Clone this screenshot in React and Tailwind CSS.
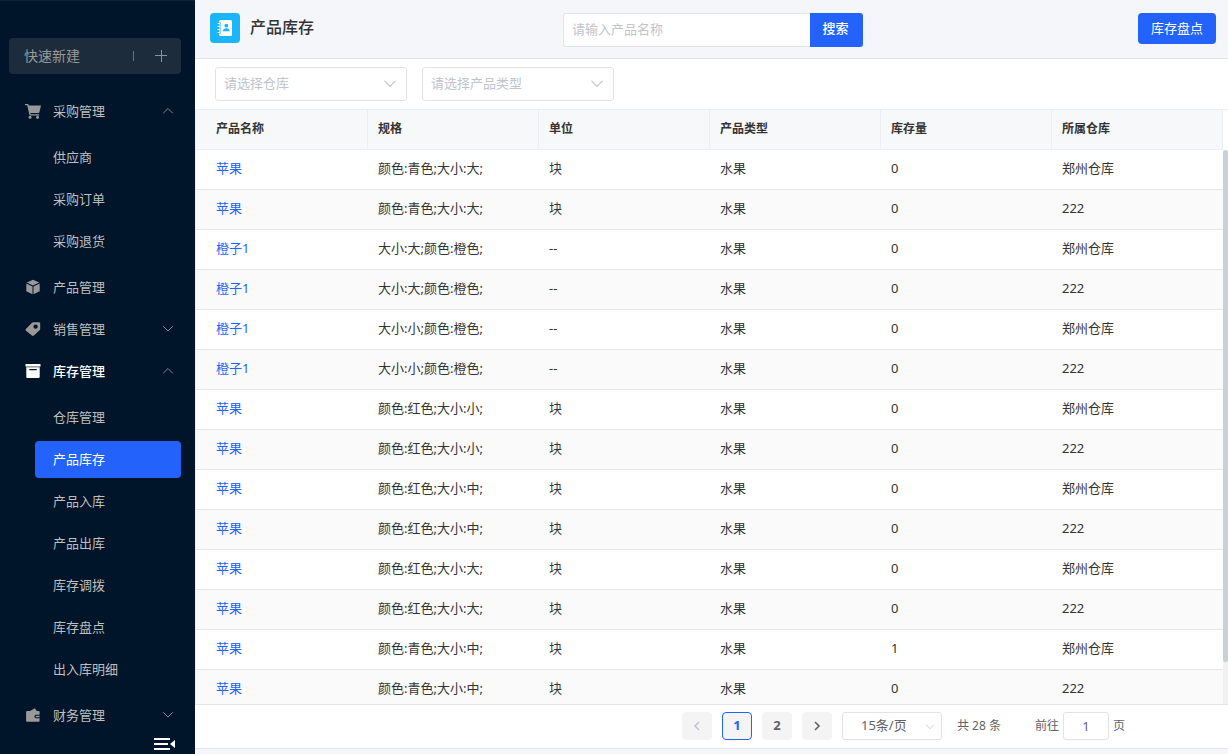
import React from "react";

function Chevron({ up = false, className = "" }) {
  return (
    <svg viewBox="0 0 12 12" className={className} fill="none" stroke="currentColor" strokeLinecap="round" strokeLinejoin="round" aria-hidden="true">
      <path d={up ? "M1.5 8 6 3.500l4.500 4.500" : "M1.500 3.500 6 8l4.500-4.500"} />
    </svg>
  );
}

function CartIcon() {
  return (
    <svg viewBox="0 0 16 16" className="size-4" fill="currentColor" aria-hidden="true">
      <path d="M0 1h3.200l.6 1.600H16l-1.600 6.600a1 1 0 0 1-1 .8H5.300l.4 1.200h8.500v1.300H4.600L2.200 2.300H0z" />
      <circle cx="5" cy="14.300" r="1.500" />
      <circle cx="12.500" cy="14.300" r="1.500" />
    </svg>
  );
}

function BoxIcon() {
  return (
    <svg viewBox="0 0 16 16" className="size-4" fill="currentColor" aria-hidden="true">
      <path d="M8 .8 14.2 3.500 8 6.500 1.800 3.500z" />
      <path d="M1.300 4.500 7.500 7.400v7.900L1.300 12.200z" />
      <path d="M14.700 4.500 8.500 7.400v7.900l6.200-3.100z" />
    </svg>
  );
}

function TagIcon() {
  return (
    <svg viewBox="0 0 16 16" className="size-4" fill="currentColor" aria-hidden="true">
      <path fillRule="evenodd" d="M8.200 1.200h5.600c.8 0 1.400.6 1.400 1.400v5.200c0 .4-.1.800-.4 1.100l-5.900 5.700c-.5.500-1.300.5-1.900 0L.9 9.700c-.5-.5-.5-1.200 0-1.700L7 1.700c.3-.3.700-.5 1.200-.5zM10.600 3.400a2.200 2.200 0 1 0 0 4.400 2.200 2.200 0 0 0 0-4.400z" />
    </svg>
  );
}

function ArchiveIcon() {
  return (
    <svg viewBox="0 0 16 16" className="size-4" fill="currentColor" aria-hidden="true">
      <path d="M.5 1h15v2.600H.5z" />
      <path fillRule="evenodd" d="M1.300 4.300h13.400v9.400c0 .8-.5 1.300-1.300 1.300H2.600c-.8 0-1.300-.5-1.300-1.300zM4.300 6v1.200h7.400V6z" />
    </svg>
  );
}

function WalletIcon() {
  return (
    <svg viewBox="0 0 16 16" className="size-4" fill="currentColor" aria-hidden="true">
      <path d="M5 4 9.900 1.300 11.700 4z" />
      <path d="M2.300 4h11.200c.7 0 1.100.4 1.100 1.100v2.700h-3.500a1.700 1.700 0 0 0 0 3.400h3.500v2.500c0 .7-.4 1.100-1.100 1.100H2.400c-.8 0-1.300-.5-1.300-1.300V5.200c0-.7.500-1.200 1.200-1.200z" />
      <path d="M11.300 8.700h3.300v1.600h-3.300a.8.8 0 0 1 0-1.600z" />
    </svg>
  );
}

function ContactsIcon() {
  return (
    <svg viewBox="0 0 18 18" className="size-[18px]" aria-hidden="true">
      <rect x="3" y="1" width="13" height="16" rx="1.500" fill="#fff" />
      <path d="M1.500 4.500H5M1.500 7.500H5M1.500 10.500H5M1.500 13.500H5" stroke="#1bb5fa" strokeWidth="2" />
      <path d="M1.500 4.500h3M1.500 7.500h3M1.500 10.500h3M1.500 13.500h3" stroke="#fff" strokeWidth="1" />
      <circle cx="10.300" cy="6.700" r="1.900" fill="#1bb5fa" />
      <path d="M6.900 12.300c0-2 1.400-3 3.400-3s3.400 1 3.400 3z" fill="#1bb5fa" />
    </svg>
  );
}

const MENU = [
  { label: "采购管理", Icon: CartIcon, open: true, children: ["供应商", "采购订单", "采购退货"] },
  { label: "产品管理", Icon: BoxIcon },
  { label: "销售管理", Icon: TagIcon, open: false },
  {
    label: "库存管理",
    Icon: ArchiveIcon,
    open: true,
    current: true,
    children: ["仓库管理", "产品库存", "产品入库", "产品出库", "库存调拨", "库存盘点", "出入库明细"],
  },
  { label: "财务管理", Icon: WalletIcon, open: false },
];

const ACTIVE = "产品库存";

const COLUMNS = ["产品名称", "规格", "单位", "产品类型", "库存量", "所属仓库"];

const ROWS = [
  ["苹果", "颜色:青色;大小:大;", "块", "水果", "0", "郑州仓库"],
  ["苹果", "颜色:青色;大小:大;", "块", "水果", "0", "222"],
  ["橙子1", "大小:大;颜色:橙色;", "--", "水果", "0", "郑州仓库"],
  ["橙子1", "大小:大;颜色:橙色;", "--", "水果", "0", "222"],
  ["橙子1", "大小:小;颜色:橙色;", "--", "水果", "0", "郑州仓库"],
  ["橙子1", "大小:小;颜色:橙色;", "--", "水果", "0", "222"],
  ["苹果", "颜色:红色;大小:小;", "块", "水果", "0", "郑州仓库"],
  ["苹果", "颜色:红色;大小:小;", "块", "水果", "0", "222"],
  ["苹果", "颜色:红色;大小:中;", "块", "水果", "0", "郑州仓库"],
  ["苹果", "颜色:红色;大小:中;", "块", "水果", "0", "222"],
  ["苹果", "颜色:红色;大小:大;", "块", "水果", "0", "郑州仓库"],
  ["苹果", "颜色:红色;大小:大;", "块", "水果", "0", "222"],
  ["苹果", "颜色:青色;大小:中;", "块", "水果", "1", "郑州仓库"],
  ["苹果", "颜色:青色;大小:中;", "块", "水果", "0", "222"],
];

function Sidebar() {
  return (
    <aside className="flex w-[195px] shrink-0 flex-col overflow-hidden border-t border-[#0d2233] bg-[#001529] pt-[37px] text-[13px] leading-5 text-[#bfbfbf]">
      <button type="button" className="mr-3.5 ml-[9px] flex h-9 shrink-0 items-center rounded bg-[#1c2c3c] pr-3.5 pl-[15px] text-sm text-[#999999]">
        <span className="flex-1 text-left">快速新建</span>
        <span className="mr-[21px] h-2.5 w-px bg-[#66707a]" />
        <svg viewBox="0 0 12 12" className="size-3" fill="none" stroke="#8c9299" aria-hidden="true">
          <path d="M6.500 0v12M0 5.500h12" />
        </svg>
      </button>
      <nav className="min-h-0 flex-1 pt-[19px]">
        <ul className="flex flex-col gap-[5px]">
          {MENU.map(({ label, Icon, open, current, children }) => (
            <li key={label}>
              <button
                type="button"
                className={`flex h-[37px] w-full items-center pr-[21px] pb-0.5 pl-[25px] ${current ? "font-medium text-white" : ""}`}
              >
                <span className={current ? "text-white" : "text-[#999999]"}>
                  <Icon />
                </span>
                <span className="ml-3 flex-1 text-left">{label}</span>
                {open !== undefined && <Chevron up={open} className="size-3 text-[#7f8a94]" />}
              </button>
              {children && (
                <ul className="mt-[9px] mb-1 flex flex-col gap-[5px] pr-3.5 pl-[35px]">
                  {children.map((child) => (
                    <li key={child}>
                      <a
                        href="#"
                        className={`flex h-[37px] items-center rounded pb-0.5 pl-[18px] ${child === ACTIVE ? "bg-[#2362fb] text-white" : ""}`}
                      >
                        {child}
                      </a>
                    </li>
                  ))}
                </ul>
              )}
            </li>
          ))}
        </ul>
      </nav>
      <div className="flex h-[17px] shrink-0 justify-end pr-5">
        <button type="button" aria-label="收起菜单" className="self-start">
          <svg viewBox="0 0 21 13" className="h-[13px] w-[21px]" aria-hidden="true">
            <path d="M0 2h16M0 7h14M0 12h16" stroke="#fff" strokeWidth="2" />
            <path d="M21 3v8l-5-4z" fill="#fff" />
          </svg>
        </button>
      </div>
    </aside>
  );
}

function FilterSelect({ label }) {
  return (
    <div className="relative w-48">
      <select aria-label={label} className="h-[34px] w-full appearance-none rounded-[3px] border border-[#e1e3e9] bg-white px-2 text-[13px] text-[#c0c4cc]">
        <option>{label}</option>
      </select>
      <Chevron className="pointer-events-none absolute top-2.5 right-2.5 size-3.5 text-[#c0c4cc]" />
    </div>
  );
}

function Header() {
  return (
    <header className="grid shrink-0 grid-cols-[1fr_300px_1fr] items-start border-b border-[#e2e4ea] bg-[#f5f6fa] pt-[13px] pr-3 pb-[11px] pl-[15px]">
      <div className="flex items-center">
        <span className="flex size-[30px] items-center justify-center rounded bg-[#1bb5fa]">
          <ContactsIcon />
        </span>
        <h1 className="ml-2.5 pb-0.5 text-base leading-6 font-medium text-[#333333]">产品库存</h1>
      </div>
      <form className="flex" onSubmit={(e) => e.preventDefault()}>
        <input
          type="text"
          aria-label="产品名称"
          placeholder="请输入产品名称"
          className="h-[34px] min-w-0 flex-1 rounded-l-[3px] border border-r-0 border-[#e1e3e9] bg-white px-2 pb-0.5 text-[13px] placeholder:text-[#c0c4cc]"
        />
        <button type="submit" className="h-[34px] w-[53px] rounded-r-[3px] bg-[#2362fb] pr-0.5 pb-0.5 text-[13px] font-medium text-white">
          搜索
        </button>
      </form>
      <button type="button" className="h-[31px] w-[78px] justify-self-end rounded bg-[#2362fb] text-[13px] text-white">
        库存盘点
      </button>
    </header>
  );
}

function InventoryTable() {
  return (
    <div className="flex min-h-0 flex-1 border-b border-[#e2e4ea]">
      <div className="min-w-0 flex-1 overflow-hidden border-l border-[#ebeef5]">
        <table className="w-full table-fixed border-separate border-spacing-0 text-left text-[13px] leading-5 text-[#333333]">
          <thead>
            <tr>
              {COLUMNS.map((name) => (
                <th
                  key={name}
                  scope="col"
                  className="h-[41px] border-y border-r border-[#ebeef5] bg-[#f7f8fa] px-2.5 pb-0.5 text-xs font-semibold first:w-[172px] first:pl-5"
                >
                  {name}
                </th>
              ))}
            </tr>
          </thead>
          <tbody>
            {ROWS.map((row, i) => (
              <tr key={i} className="even:bg-[#fafafa]">
                {row.map((cell, j) => (
                  <td key={j} className="h-10 border-b border-[#e6e6e6] px-2.5 pb-[3px] first:pl-5">
                    {j === 0 ? (
                      <a href="#" className="text-[#2362fb]">
                        {cell}
                      </a>
                    ) : (
                      cell
                    )}
                  </td>
                ))}
              </tr>
            ))}
          </tbody>
        </table>
      </div>
      <div className="flex w-[5px] flex-col border-t border-[#ebeef5] pt-10">
        <div className="flex-1 bg-[#f1f1f1]">
          <div className="h-[92.5%] rounded-[3px] bg-[#c6d1da]" />
        </div>
      </div>
    </div>
  );
}

function Pagination() {
  const page = "flex h-7 w-[30px] items-center justify-center rounded-sm text-[13px] font-bold";
  return (
    <footer className="flex h-[43px] shrink-0 items-center justify-end pr-[103px] pb-px text-xs text-[#606266]">
      <div className="flex gap-2.5">
        <button type="button" aria-label="上一页" disabled className={`${page} bg-[#f4f4f5] text-[#c0c4cc]`}>
          <svg viewBox="0 0 12 12" className="size-3" fill="none" stroke="currentColor" strokeWidth="1.6" aria-hidden="true">
            <path d="M8 2 4 6l4 4" />
          </svg>
        </button>
        <button type="button" aria-current="page" className={`${page} border border-[#2362fb] bg-[#f4f4f5] text-[#2362fb]`}>
          1
        </button>
        <button type="button" className={`${page} bg-[#f4f4f5]`}>
          2
        </button>
        <button type="button" aria-label="下一页" className={`${page} bg-[#f4f4f5]`}>
          <svg viewBox="0 0 12 12" className="size-3" fill="none" stroke="currentColor" strokeWidth="1.6" aria-hidden="true">
            <path d="m4 2 4 4-4 4" />
          </svg>
        </button>
        <div className="relative w-[100px]">
          <select aria-label="每页条数" className="h-7 w-full appearance-none rounded-[3px] border border-[#e1e3e9] bg-white pl-[18px] text-[13px]">
            <option>15条/页</option>
          </select>
          <Chevron className="pointer-events-none absolute top-2.5 right-[7px] size-2.5 text-[#c0c4cc]" />
        </div>
      </div>
      <span className="ml-[15px]">共 28 条</span>
      <label className="ml-[34px] flex items-center gap-1">
        前往
        <input type="text" defaultValue="1" className="h-7 w-[46px] rounded-[3px] border border-[#e1e3e9] bg-white text-center text-[13px]" />
        页
      </label>
    </footer>
  );
}

export default function App() {
  return (
    <div className={`flex h-screen overflow-hidden bg-[#f5f6fa] font-["Noto_Sans","Noto_Sans_CJK_SC",sans-serif]`}>
      <Sidebar />
      <main className="flex min-w-0 flex-1 flex-col">
        <Header />
        <section className="flex min-h-0 flex-1 flex-col border-b border-[#e2e4ea] bg-white">
          <div className="flex shrink-0 gap-[15px] px-5 py-2">
            <FilterSelect label="请选择仓库" />
            <FilterSelect label="请选择产品类型" />
          </div>
          <InventoryTable />
          <Pagination />
        </section>
        <div className="h-[5px] shrink-0" />
      </main>
    </div>
  );
}
